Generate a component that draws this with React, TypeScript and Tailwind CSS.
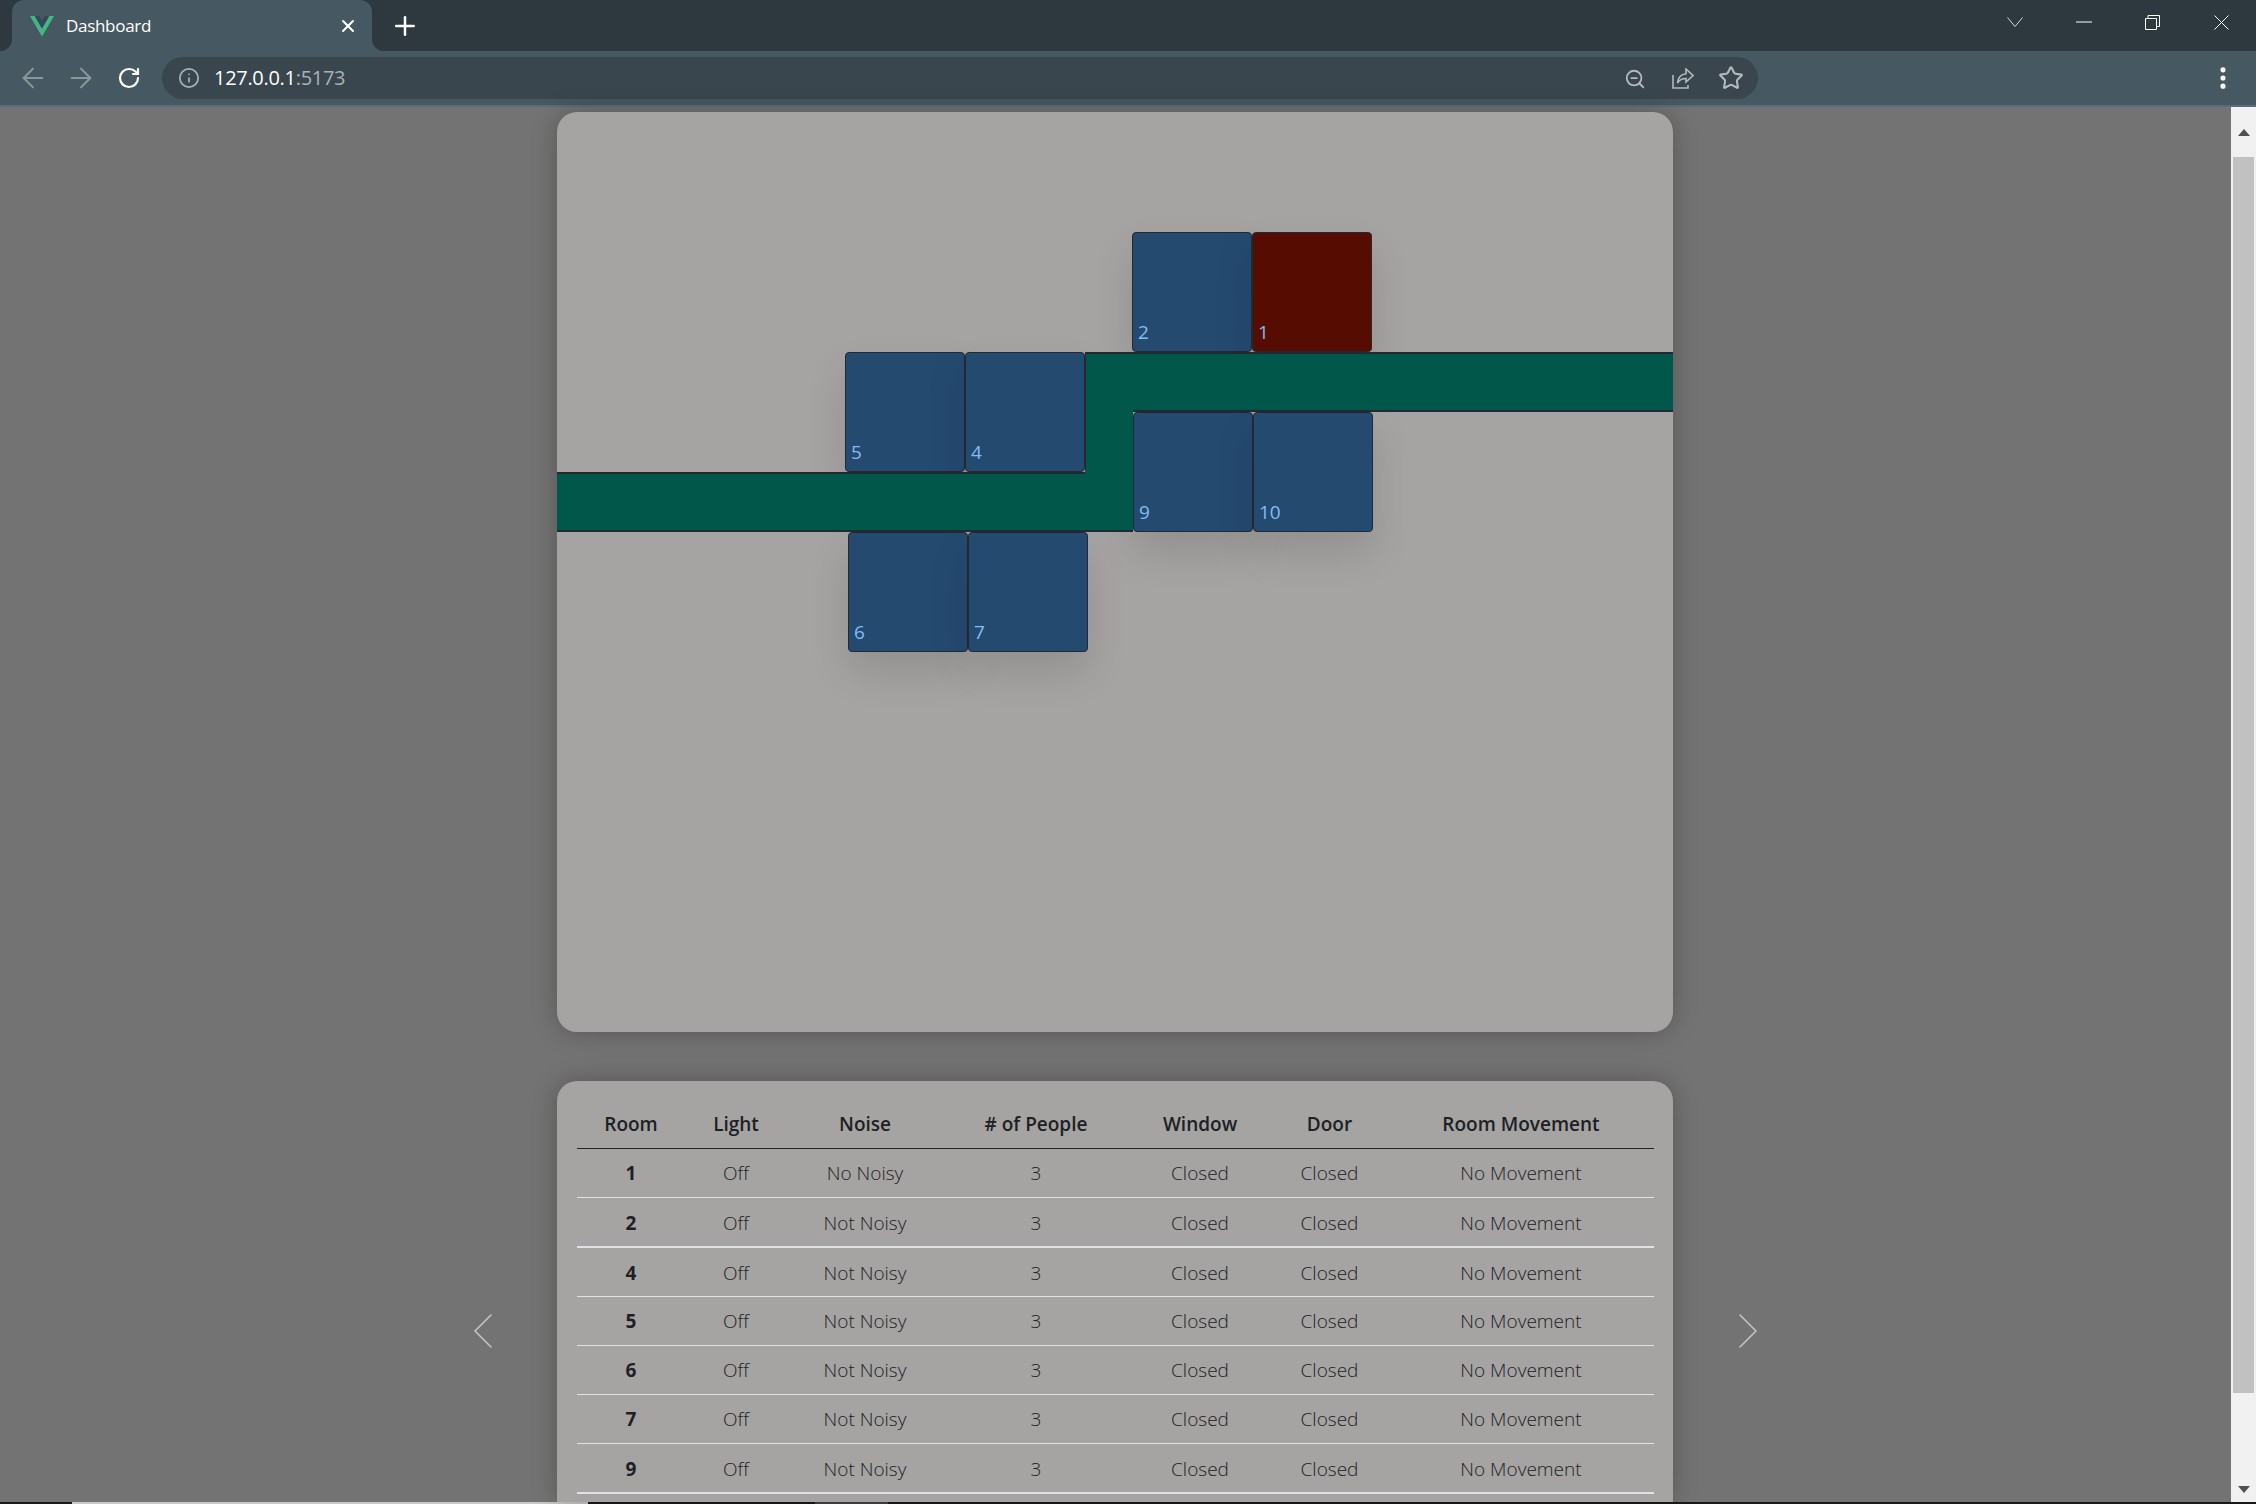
import React from 'react';
import { ArrowLeft, ArrowRight, ChevronLeft, ChevronRight, EllipsisVertical, Info, Plus, RotateCw, Star, X, ZoomOut } from 'lucide-react';

interface RoomBoxProps {
  label: string;
  pos: string;
  color?: string;
}

function RoomBox({ label, pos, color = 'bg-[#254a70]' }: RoomBoxProps) {
  return (
    <div className={`absolute w-[120px] h-[120px] rounded-[4px] border border-[#212a33] shadow-[0_20px_40px_rgba(0,0,0,0.12)] ${color} ${pos}`}>
      <span className="absolute left-[5px] bottom-[7px] text-[19px] leading-[24px] font-normal text-[#82bdf5]">{label}</span>
    </div>
  );
}

const rows = [
  { room: '1', noise: 'No Noisy', line: 'h-[49px] border-b' },
  { room: '2', noise: 'Not Noisy', line: 'h-[50px] border-b-2' },
  { room: '4', noise: 'Not Noisy', line: 'h-[49px] border-b' },
  { room: '5', noise: 'Not Noisy', line: 'h-[49px] border-b' },
  { room: '6', noise: 'Not Noisy', line: 'h-[49px] border-b' },
  { room: '7', noise: 'Not Noisy', line: 'h-[49px] border-b' },
  { room: '9', noise: 'Not Noisy', line: 'h-[50px] border-b-2' },
];

const headers = ['Room', 'Light', 'Noise', '# of People', 'Window', 'Door', 'Room Movement'];

export default function App() {
  return (
    <div className="w-[2256px] h-[1504px] flex flex-col overflow-hidden bg-[#737373] font-['Open_Sans','Noto_Sans',sans-serif]">
      {/* Tab strip */}
      <div className="h-[51px] shrink-0 flex bg-[#465861]">
        <div className="w-[12px] bg-[#2d383f] rounded-br-[12px]"></div>
        <div className="w-[360px] bg-[#2d383f]">
          <div className="h-full flex items-center pl-[18px] pr-[14px] bg-[#465861] rounded-t-[12px] text-white">
            <svg width="24" height="20" viewBox="0 0 24 20" className="shrink-0">
              <path d="M0 0h4.8L12 12.4 19.2 0H24L12 20.6z" fill="#41b883" />
              <path d="M4.8 0h4.4L12 4.9 14.8 0h4.4L12 12.4z" fill="#34495e" />
            </svg>
            <span className="ml-[12px] text-[17px] leading-[24px] tracking-[-0.3px]">Dashboard</span>
            <X size={20} strokeWidth={2.5} className="ml-auto" />
          </div>
        </div>
        <div className="flex-1 flex items-center bg-[#2d383f] rounded-bl-[12px] pl-[18px]">
          <Plus size={30} strokeWidth={2} className="text-white" />
          <div className="ml-auto h-[44px] self-start flex text-white">
            <div className="w-[68px] flex items-center justify-center">
              <svg width="16" height="10" viewBox="0 0 16 10" fill="none" stroke="#d5d9db" strokeWidth="1"><path d="M.5.5 8 9.5 15.5.5" /></svg>
            </div>
            <div className="w-[69px] flex items-center justify-center">
              <svg width="16" height="2" viewBox="0 0 16 2"><path d="M0 1h16" stroke="#fff" strokeWidth="1" /></svg>
            </div>
            <div className="w-[69px] flex items-center justify-center">
              <svg width="15" height="15" viewBox="0 0 15 15" fill="none" stroke="#fff" strokeWidth="1"><path d="M3 3V.5h11.500v11H11.500" /><path d="M.5 3.500h11v11H.5z" /></svg>
            </div>
            <div className="w-[69px] flex items-center justify-center">
              <svg width="15" height="15" viewBox="0 0 15 15" fill="none" stroke="#fff" strokeWidth="1"><path d="M.5.5l14 14M14.500.5l-14 14" /></svg>
            </div>
          </div>
        </div>
      </div>

      {/* Toolbar */}
      <div className="h-[54px] shrink-0 flex items-center pl-[9px] pr-[9px] bg-[#465861]">
        <div className="w-[48px] flex justify-center text-[#8b979d]"><ArrowLeft size={32} strokeWidth={1.5} /></div>
        <div className="w-[48px] flex justify-center text-[#8b979d]"><ArrowRight size={32} strokeWidth={1.5} /></div>
        <div className="w-[48px] flex justify-center text-white"><RotateCw size={24} strokeWidth={2.2} /></div>
        <div className="ml-[9px] w-[1596px] h-[42px] flex items-center rounded-full bg-[#39464e] pl-[16px] pr-[3px]">
          <Info size={22} strokeWidth={1.9} className="text-[#a9b1b5]" />
          <span className="ml-[14px] text-[20px] leading-[24px] tracking-[-0.3px] text-white">127.0.0.1<span className="text-[#a9b1b5]">:5173</span></span>
          <div className="ml-auto flex items-center text-[#b3b9bc]">
            <div className="w-[48px] flex justify-center pt-[1px]"><ZoomOut size={22} strokeWidth={2} /></div>
            <div className="w-[48px] flex justify-center">
              <svg width="22" height="21" viewBox="0 0 22 21" fill="none" stroke="currentColor" strokeWidth="1.6">
                <path d="M1 7v13h15v-3" />
                <path d="M14 1l7 6.500-7 6.500v-3.500c-4 0-6.500 1.200-8.500 4.500.5-5.500 3.500-8.800 8.500-9.300z" />
              </svg>
            </div>
            <div className="w-[48px] flex justify-center"><Star size={26} strokeWidth={1.9} /></div>
          </div>
        </div>
        <div className="ml-auto w-[48px] flex justify-center text-white"><EllipsisVertical size={28} strokeWidth={2.4} /></div>
      </div>
      <div className="h-[2px] shrink-0 bg-[#5d6b73]"></div>

      {/* Page */}
      <div className="relative flex-1 min-h-0 flex">
        <div className="flex-1 min-w-0 flex flex-col items-center pr-[1px] pt-[5px] gap-[49px]">
          <div className="relative w-[1116px] h-[920px] shrink-0 rounded-[20px] bg-[#a5a4a2] overflow-hidden shadow-[0_0_24px_rgba(0,0,0,0.25)]">
            <RoomBox label="2" pos="left-[575px] top-[120px]" />
            <RoomBox label="1" pos="left-[695px] top-[120px]" color="bg-[#560c00]" />
            <RoomBox label="5" pos="left-[288px] top-[240px]" />
            <RoomBox label="4" pos="left-[408px] top-[240px]" />
            <RoomBox label="9" pos="left-[576px] top-[300px]" />
            <RoomBox label="10" pos="left-[696px] top-[300px]" />
            <RoomBox label="6" pos="left-[291px] top-[420px]" />
            <RoomBox label="7" pos="left-[411px] top-[420px]" />
            {/* Corridor */}
            <div className="absolute left-[528px] top-[240px] w-[588px] h-[60px] bg-[#00574a] border-y-2 border-[#212a33]"></div>
            <div className="absolute left-0 top-[360px] w-[576px] h-[60px] bg-[#00574a] border-y-2 border-[#212a33]"></div>
            <div className="absolute left-[528px] top-[242px] w-[48px] h-[118px] bg-[#00574a] border-l border-[#212a33]"></div>
            <div className="absolute left-[528px] top-[358px] w-[48px] h-[60px] bg-[#00574a]"></div>
          </div>

          <div className="w-[1116px] flex-1 min-h-0 overflow-hidden rounded-t-[20px] bg-[#a5a4a2] shadow-[0_0_24px_rgba(0,0,0,0.25)] pl-[20px] pt-[18px]">
            <table className="w-[1077px] table-fixed border-collapse text-center text-[#1d2125] text-[19px]">
              <colgroup>
                <col className="w-[108px]" />
                <col className="w-[102px]" />
                <col className="w-[156px]" />
                <col className="w-[186px]" />
                <col className="w-[142px]" />
                <col className="w-[117px]" />
                <col className="w-[266px]" />
              </colgroup>
              <thead>
                <tr className="h-[49px] border-b border-[#212529]">
                  {headers.map((h) => (
                    <th key={h} className="font-semibold pt-[2px]">{h}</th>
                  ))}
                </tr>
              </thead>
              <tbody>
                {rows.map((row) => (
                  <tr key={row.room} className={`border-[#dee2e6] ${row.line}`}>
                    <td className="font-bold pt-[2px]">{row.room}</td>
                    <td className="font-light pt-[2px]">Off</td>
                    <td className="font-light pt-[2px]">{row.noise}</td>
                    <td className="font-light pt-[2px]">3</td>
                    <td className="font-light pt-[2px]">Closed</td>
                    <td className="font-light pt-[2px]">Closed</td>
                    <td className="font-light pt-[2px]">No Movement</td>
                  </tr>
                ))}
              </tbody>
            </table>
          </div>
        </div>

        {/* Carousel arrows */}
        <ChevronLeft size={64} strokeWidth={0.6} className="absolute left-[451px] top-[1192px] text-[#c4c4c4]" />
        <ChevronRight size={64} strokeWidth={0.6} className="absolute left-[1716px] top-[1192px] text-[#c4c4c4]" />

        {/* Scrollbar */}
        <div className="w-[25px] shrink-0 flex flex-col items-center bg-[#f1f1f1]">
          <div className="h-[50px] flex items-center justify-center">
            <svg width="12" height="7" viewBox="0 0 12 7"><path d="M6 0l6 7H0z" fill="#505050" /></svg>
          </div>
          <div className="w-[21px] h-[1236px] bg-[#c1c1c1]"></div>
          <div className="mt-auto h-[25px] flex items-center justify-center">
            <svg width="12" height="7" viewBox="0 0 12 7"><path d="M0 0h12L6 7z" fill="#505050" /></svg>
          </div>
        </div>
      </div>

      {/* Taskbar edge */}
      <div className="h-[2px] shrink-0 flex bg-[#1a1a1a]">
        <div className="w-[72px]"></div>
        <div className="w-[516px] bg-[#c9c9c9]"></div>
        <div className="w-[227px]"></div>
        <div className="w-[73px] bg-[#454545]"></div>
      </div>
    </div>
  );
}
